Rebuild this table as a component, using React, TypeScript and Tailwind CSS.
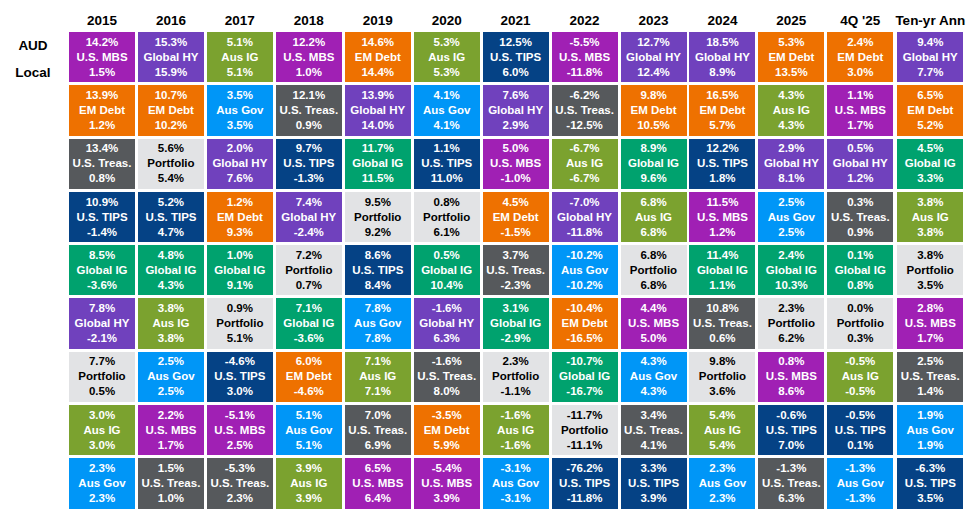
import React from "react";

type Asset = "MBS" | "GHY" | "AIG" | "EM" | "AGOV" | "TRS" | "TIPS" | "GIG" | "PORT";

const assets: Record<Asset, { name: string; cls: string }> = {
  MBS: { name: "U.S. MBS", cls: "bg-[#a020b4] text-white" },
  GHY: { name: "Global HY", cls: "bg-[#7041bd] text-white" },
  AIG: { name: "Aus IG", cls: "bg-[#7ba22f] text-white" },
  EM: { name: "EM Debt", cls: "bg-[#ee7100] text-white" },
  AGOV: { name: "Aus Gov", cls: "bg-[#0096f7] text-white" },
  TRS: { name: "U.S. Treas.", cls: "bg-[#56595c] text-white" },
  TIPS: { name: "U.S. TIPS", cls: "bg-[#054285] text-white" },
  GIG: { name: "Global IG", cls: "bg-[#00a26e] text-white" },
  PORT: { name: "Portfolio", cls: "bg-[#e2e3e5] text-black" },
};

type Cell = [string, Asset, string];

const columns: { year: string; cells: Cell[] }[] = [
  {
    year: "2015",
    cells: [
      ["14.2%", "MBS", "1.5%"],
      ["13.9%", "EM", "1.2%"],
      ["13.4%", "TRS", "0.8%"],
      ["10.9%", "TIPS", "-1.4%"],
      ["8.5%", "GIG", "-3.6%"],
      ["7.8%", "GHY", "-2.1%"],
      ["7.7%", "PORT", "0.5%"],
      ["3.0%", "AIG", "3.0%"],
      ["2.3%", "AGOV", "2.3%"],
    ],
  },
  {
    year: "2016",
    cells: [
      ["15.3%", "GHY", "15.9%"],
      ["10.7%", "EM", "10.2%"],
      ["5.6%", "PORT", "5.4%"],
      ["5.2%", "TIPS", "4.7%"],
      ["4.8%", "GIG", "4.3%"],
      ["3.8%", "AIG", "3.8%"],
      ["2.5%", "AGOV", "2.5%"],
      ["2.2%", "MBS", "1.7%"],
      ["1.5%", "TRS", "1.0%"],
    ],
  },
  {
    year: "2017",
    cells: [
      ["5.1%", "AIG", "5.1%"],
      ["3.5%", "AGOV", "3.5%"],
      ["2.0%", "GHY", "7.6%"],
      ["1.2%", "EM", "9.3%"],
      ["1.0%", "GIG", "9.1%"],
      ["0.9%", "PORT", "5.1%"],
      ["-4.6%", "TIPS", "3.0%"],
      ["-5.1%", "MBS", "2.5%"],
      ["-5.3%", "TRS", "2.3%"],
    ],
  },
  {
    year: "2018",
    cells: [
      ["12.2%", "MBS", "1.0%"],
      ["12.1%", "TRS", "0.9%"],
      ["9.7%", "TIPS", "-1.3%"],
      ["7.4%", "GHY", "-2.4%"],
      ["7.2%", "PORT", "0.7%"],
      ["7.1%", "GIG", "-3.6%"],
      ["6.0%", "EM", "-4.6%"],
      ["5.1%", "AGOV", "5.1%"],
      ["3.9%", "AIG", "3.9%"],
    ],
  },
  {
    year: "2019",
    cells: [
      ["14.6%", "EM", "14.4%"],
      ["13.9%", "GHY", "14.0%"],
      ["11.7%", "GIG", "11.5%"],
      ["9.5%", "PORT", "9.2%"],
      ["8.6%", "TIPS", "8.4%"],
      ["7.8%", "AGOV", "7.8%"],
      ["7.1%", "AIG", "7.1%"],
      ["7.0%", "TRS", "6.9%"],
      ["6.5%", "MBS", "6.4%"],
    ],
  },
  {
    year: "2020",
    cells: [
      ["5.3%", "AIG", "5.3%"],
      ["4.1%", "AGOV", "4.1%"],
      ["1.1%", "TIPS", "11.0%"],
      ["0.8%", "PORT", "6.1%"],
      ["0.5%", "GIG", "10.4%"],
      ["-1.6%", "GHY", "6.3%"],
      ["-1.6%", "TRS", "8.0%"],
      ["-3.5%", "EM", "5.9%"],
      ["-5.4%", "MBS", "3.9%"],
    ],
  },
  {
    year: "2021",
    cells: [
      ["12.5%", "TIPS", "6.0%"],
      ["7.6%", "GHY", "2.9%"],
      ["5.0%", "MBS", "-1.0%"],
      ["4.5%", "EM", "-1.5%"],
      ["3.7%", "TRS", "-2.3%"],
      ["3.1%", "GIG", "-2.9%"],
      ["2.3%", "PORT", "-1.1%"],
      ["-1.6%", "AIG", "-1.6%"],
      ["-3.1%", "AGOV", "-3.1%"],
    ],
  },
  {
    year: "2022",
    cells: [
      ["-5.5%", "MBS", "-11.8%"],
      ["-6.2%", "TRS", "-12.5%"],
      ["-6.7%", "AIG", "-6.7%"],
      ["-7.0%", "GHY", "-11.8%"],
      ["-10.2%", "AGOV", "-10.2%"],
      ["-10.4%", "EM", "-16.5%"],
      ["-10.7%", "GIG", "-16.7%"],
      ["-11.7%", "PORT", "-11.1%"],
      ["-76.2%", "TIPS", "-11.8%"],
    ],
  },
  {
    year: "2023",
    cells: [
      ["12.7%", "GHY", "12.4%"],
      ["9.8%", "EM", "10.5%"],
      ["8.9%", "GIG", "9.6%"],
      ["6.8%", "AIG", "6.8%"],
      ["6.8%", "PORT", "6.8%"],
      ["4.4%", "MBS", "5.0%"],
      ["4.3%", "AGOV", "4.3%"],
      ["3.4%", "TRS", "4.1%"],
      ["3.3%", "TIPS", "3.9%"],
    ],
  },
  {
    year: "2024",
    cells: [
      ["18.5%", "GHY", "8.9%"],
      ["16.5%", "EM", "5.7%"],
      ["12.2%", "TIPS", "1.8%"],
      ["11.5%", "MBS", "1.2%"],
      ["11.4%", "GIG", "1.1%"],
      ["10.8%", "TRS", "0.6%"],
      ["9.8%", "PORT", "3.6%"],
      ["5.4%", "AIG", "5.4%"],
      ["2.3%", "AGOV", "2.3%"],
    ],
  },
  {
    year: "2025",
    cells: [
      ["5.3%", "EM", "13.5%"],
      ["4.3%", "AIG", "4.3%"],
      ["2.9%", "GHY", "8.1%"],
      ["2.5%", "AGOV", "2.5%"],
      ["2.4%", "GIG", "10.3%"],
      ["2.3%", "PORT", "6.2%"],
      ["0.8%", "MBS", "8.6%"],
      ["-0.6%", "TIPS", "7.0%"],
      ["-1.3%", "TRS", "6.3%"],
    ],
  },
  {
    year: "4Q '25",
    cells: [
      ["2.4%", "EM", "3.0%"],
      ["1.1%", "MBS", "1.7%"],
      ["0.5%", "GHY", "1.2%"],
      ["0.3%", "TRS", "0.9%"],
      ["0.1%", "GIG", "0.8%"],
      ["0.0%", "PORT", "0.3%"],
      ["-0.5%", "AIG", "-0.5%"],
      ["-0.5%", "TIPS", "0.1%"],
      ["-1.3%", "AGOV", "-1.3%"],
    ],
  },
  {
    year: "Ten-yr Ann",
    cells: [
      ["9.4%", "GHY", "7.7%"],
      ["6.5%", "EM", "5.2%"],
      ["4.5%", "GIG", "3.3%"],
      ["3.8%", "AIG", "3.8%"],
      ["3.8%", "PORT", "3.5%"],
      ["2.8%", "MBS", "1.7%"],
      ["2.5%", "TRS", "1.4%"],
      ["1.9%", "AGOV", "1.9%"],
      ["-6.3%", "TIPS", "3.5%"],
    ],
  },
];

function Tile({ cell }: { cell: Cell }) {
  const a = assets[cell[1]];
  return (
    <div
      className={`h-[50.3px] flex flex-col items-center justify-center text-[11.5px] leading-[15px] font-bold whitespace-nowrap ${a.cls}`}
    >
      <span>{cell[0]}</span>
      <span>{a.name}</span>
      <span>{cell[2]}</span>
    </div>
  );
}

export default function App() {
  return (
    <div
      className="w-[977px] h-[516px] bg-white text-black flex"
      style={{ fontFamily: '"Liberation Sans", Arial, sans-serif' }}
    >
      {/* label column */}
      <div className="w-[66px] flex flex-col items-center pt-[32px] text-[13.5px] font-bold leading-[27px]">
        <span>AUD</span>
        <span>Local</span>
      </div>
      <div className="flex gap-x-[2.95px] ml-[3px]">
        {columns.map((col, i) => (
          <div
            key={col.year}
            className={`w-[66px] flex flex-col gap-y-[3px] ${i === columns.length - 1 ? "ml-[1px]" : ""}`}
          >
            <div className="h-[29px] flex items-end justify-center pb-[2px] text-[13.5px] font-bold leading-none whitespace-nowrap">
              {col.year}
            </div>
            {col.cells.map((c, j) => (
              <Tile key={j} cell={c} />
            ))}
          </div>
        ))}
      </div>
    </div>
  );
}
